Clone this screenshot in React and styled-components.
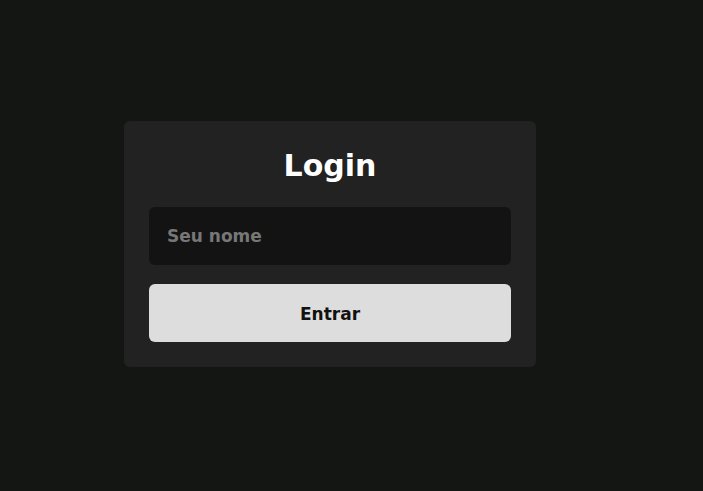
import React from "react";
import styled, { createGlobalStyle } from "styled-components";

const Global = createGlobalStyle`
  html, body { margin: 0; padding: 0; background: #131613; }
  body { font-family: "DejaVu Sans", Verdana, sans-serif; }
  * { box-sizing: border-box; }
`;

const Page = styled.div`
  min-height: 100vh;
  display: flex;
  align-items: center;
  justify-content: center;
  padding: 0 43px 3px 0;
`;

const Card = styled.form`
  width: 412px;
  background: #222222;
  border-radius: 6px;
  padding: 27px 25px 25px;
  display: flex;
  flex-direction: column;
  gap: 19px;
`;

const Title = styled.h1`
  margin: 0 0 4px;
  text-align: center;
  color: #ffffff;
  font-size: 30px;
  line-height: 36px;
  font-weight: bold;
`;

const Field = styled.input`
  height: 58px;
  border: none;
  border-radius: 6px;
  background: #131313;
  color: #eee;
  padding: 0 18px;
  font-family: inherit;
  font-size: 17px;
  font-weight: bold;
  outline: none;
  &::placeholder { color: #777777; }
`;

const Button = styled.button`
  height: 58px;
  border: none;
  border-radius: 6px;
  background: #dddddd;
  color: #111111;
  padding: 2px 0 0;
  font-family: inherit;
  font-size: 17px;
  font-weight: bold;
  cursor: pointer;
`;

export default function App() {
  return (
    <>
      <Global />
      <Page>
        <Card onSubmit={(e) => e.preventDefault()}>
          <Title>Login</Title>
          <Field placeholder="Seu nome" />
          <Button type="submit">Entrar</Button>
        </Card>
      </Page>
    </>
  );
}
